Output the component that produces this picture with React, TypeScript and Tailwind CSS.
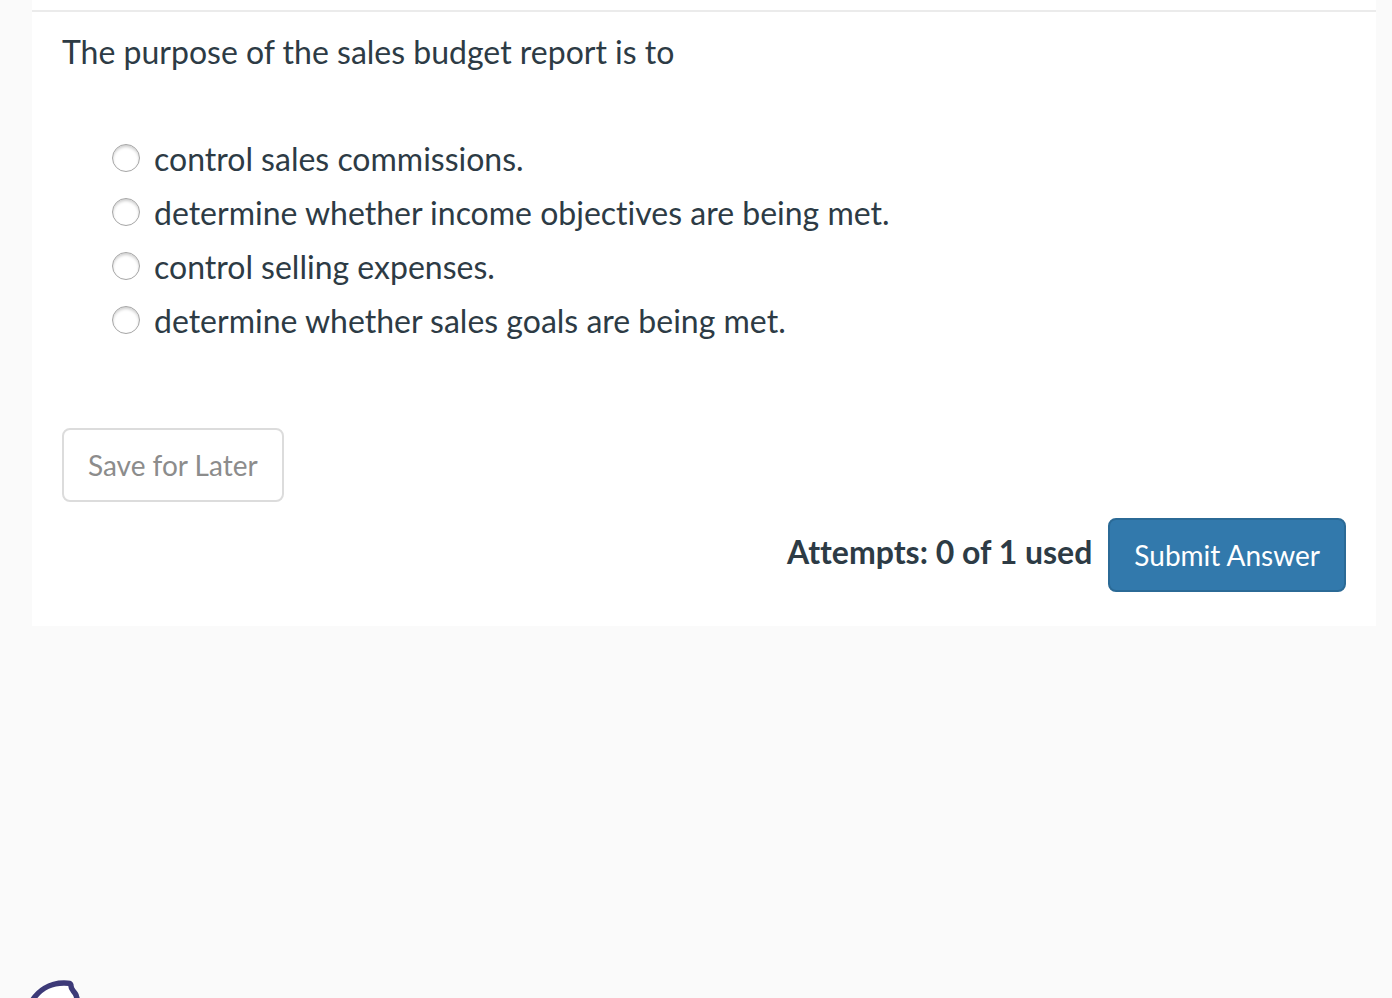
const options = [
  "control sales commissions.",
  "determine whether income objectives are being met.",
  "control selling expenses.",
  "determine whether sales goals are being met.",
];

export default function App() {
  return (
    <div className="flex min-h-screen flex-col justify-between overflow-hidden bg-[#fafafa] font-['Lato',sans-serif] text-[#2d3b45] [font-variant-ligatures:none]">
      <main className="mr-4 ml-8 bg-white pt-[10px]">
        <form className="border-t-2 border-[#ebebeb] px-[30px] pt-5 pb-[34px]">
          <fieldset>
            <legend className="text-[32px] leading-10">The purpose of the sales budget report is to</legend>
            <div className="mt-[61px] ml-[50px]">
              {options.map((option, index) => (
                <label key={option} className="flex h-[54px] items-center gap-[14px] text-[32px] leading-[52px]">
                  <input
                    type="radio"
                    name="answer"
                    value={index}
                    className="mb-1 size-7 appearance-none rounded-full border border-[#a6a6a6] bg-white shadow-[inset_0_2px_3px_#d0d0d0] checked:border-8 checked:border-[#3279ac]"
                  />
                  <span className="pb-[2px]">{option}</span>
                </label>
              ))}
            </div>
          </fieldset>

          <button
            type="button"
            className="mt-[79px] block h-[74px] rounded-lg border-2 border-[#dcdcdc] bg-white px-6 text-[28px] text-[#8c8c8c]"
          >
            Save for Later
          </button>

          <div className="mt-4 flex items-center justify-end gap-4">
            <p className="pb-[6px] text-[32px] leading-10 font-bold">Attempts: 0 of 1 used</p>
            <button
              type="submit"
              className="h-[74px] rounded-lg border-2 border-[#2b6a96] bg-[#3279ac] px-6 text-[28px] text-white"
            >
              Submit Answer
            </button>
          </div>
        </form>
      </main>

      <footer className="pl-7">
        <svg className="h-5 w-14" viewBox="0 0 56 20" fill="none" aria-hidden="true">
          <path
            d="M4 23C10 13 21 5 36 5C41 5 43 5 43 8C43 12 46 13 48 17L50 24"
            fill="#ffffff"
            stroke="#3d3a78"
            strokeWidth="5.5"
            strokeLinejoin="round"
          />
        </svg>
      </footer>
    </div>
  );
}
